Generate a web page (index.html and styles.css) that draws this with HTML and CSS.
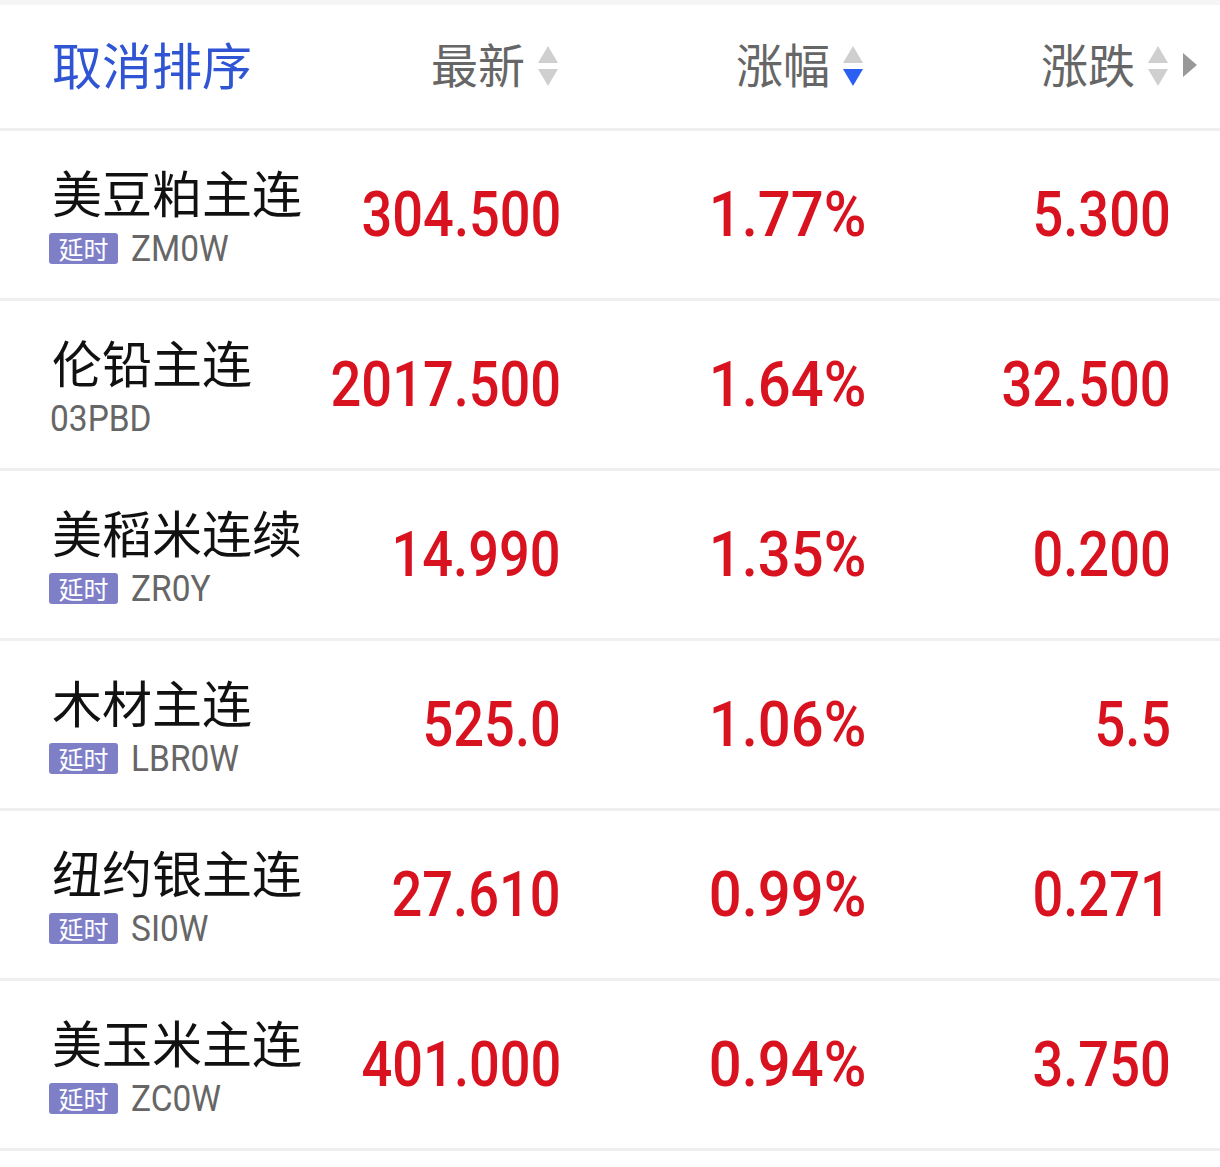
FILE: index.html
```html
<!DOCTYPE html>
<html lang="zh-CN">
<head>
<meta charset="utf-8">
<link rel="stylesheet" href="styles.css">
</head>
<body>
<div class="page">
  <div class="topstrip"></div>
  <div class="header">
    <div class="cancel">取消排序</div>
    <div class="hcell"><span>最新</span>
      <span class="sort"><i class="up"></i><i class="down"></i></span></div>
    <div class="hcell"><span>涨幅</span>
      <span class="sort"><i class="up"></i><i class="down active"></i></span></div>
    <div class="hcell"><span>涨跌</span>
      <span class="sort"><i class="up"></i><i class="down"></i></span></div>
    <div class="more"><i class="right"></i></div>
  </div>

  <div class="row">
    <div class="name"><div class="cn">美豆粕主连</div><div class="code"><span class="tag">延时</span><span class="sym">ZM0W</span></div></div>
    <div class="num"><span>304.500</span></div><div class="num pct"><span>1.77%</span></div><div class="num"><span>5.300</span></div>
  </div>
  <div class="row">
    <div class="name"><div class="cn">伦铅主连</div><div class="code nocode"><span class="sym">03PBD</span></div></div>
    <div class="num"><span>2017.500</span></div><div class="num pct"><span>1.64%</span></div><div class="num"><span>32.500</span></div>
  </div>
  <div class="row">
    <div class="name"><div class="cn">美稻米连续</div><div class="code"><span class="tag">延时</span><span class="sym">ZR0Y</span></div></div>
    <div class="num"><span>14.990</span></div><div class="num pct"><span>1.35%</span></div><div class="num"><span>0.200</span></div>
  </div>
  <div class="row">
    <div class="name"><div class="cn">木材主连</div><div class="code"><span class="tag">延时</span><span class="sym">LBR0W</span></div></div>
    <div class="num"><span>525.0</span></div><div class="num pct"><span>1.06%</span></div><div class="num"><span>5.5</span></div>
  </div>
  <div class="row">
    <div class="name"><div class="cn">纽约银主连</div><div class="code"><span class="tag">延时</span><span class="sym">SI0W</span></div></div>
    <div class="num"><span>27.610</span></div><div class="num pct"><span>0.99%</span></div><div class="num"><span>0.271</span></div>
  </div>
  <div class="row">
    <div class="name"><div class="cn">美玉米主连</div><div class="code"><span class="tag">延时</span><span class="sym">ZC0W</span></div></div>
    <div class="num"><span>401.000</span></div><div class="num pct"><span>0.94%</span></div><div class="num"><span>3.750</span></div>
  </div>
</div>
</body>
</html>
```
FILE: styles.css
```css
html, body {
  margin: 0;
  padding: 0;
  background: #ffffff;
}
.page {
  width: 1220px;
  font-family: "Noto Sans CJK SC", "Noto Sans", sans-serif;
}
.topstrip {
  height: 5px;
  background: #f5f5f5;
}
.header, .row {
  display: grid;
  grid-template-columns: 259px 250px 305px 305px 1fr;
  padding-left: 52px;
  align-items: center;
  border-bottom: 3px solid #efefef;
}
.header {
  height: 123px;
}
.row {
  height: 167px;
}
.cancel {
  color: #2f55d4;
  font-size: 50px;
  line-height: 1;
  padding-bottom: 8px;
}
.hcell {
  display: flex;
  justify-content: flex-end;
  align-items: center;
  color: #666666;
  font-size: 47px;
  line-height: 1;
  gap: 12px;
  padding-bottom: 8px;
  padding-right: 2px;
}
.hcell .sort {
  margin-top: 6px;
}
.sort {
  display: flex;
  flex-direction: column;
  gap: 6px;
  width: 22px;
  align-items: center;
}
.sort i {
  display: block;
  width: 0;
  height: 0;
  border-left: 10px solid transparent;
  border-right: 10px solid transparent;
}
.sort .up {
  border-bottom: 17px solid #cfcfcf;
}
.sort .down {
  border-top: 17px solid #cfcfcf;
}
.sort .down.active {
  border-top-color: #2b5ff2;
}
.more {
  display: flex;
  align-items: center;
  padding-left: 12px;
  padding-bottom: 4px;
}
.more .right {
  display: block;
  width: 0;
  height: 0;
  border-top: 12px solid transparent;
  border-bottom: 12px solid transparent;
  border-left: 14px solid #999999;
}
.name {
  display: flex;
  flex-direction: column;
  gap: 8px;
  padding-top: 0;
}
.cn {
  color: #111111;
  font-size: 50px;
  line-height: 60px;
  white-space: nowrap;
}
.code {
  display: flex;
  align-items: center;
  color: #666666;
  font-family: "Roboto", "Liberation Sans", sans-serif;
  font-size: 36px;
  line-height: 40px;
  height: 40px;
}
.sym {
  display: inline-block;
  transform: scaleX(0.93);
  transform-origin: left center;
  white-space: nowrap;
}
.nocode {
  margin-left: -2px;
}
.tag {
  display: inline-block;
  flex: none;
  background: #7f7fc8;
  color: #ffffff;
  font-family: "Noto Sans CJK SC", sans-serif;
  font-size: 25px;
  line-height: 31px;
  height: 31px;
  width: 69px;
  text-align: center;
  border-radius: 3px;
  margin-left: -3px;
  margin-right: 13px;
}
.num {
  display: flex;
  justify-content: flex-end;
  color: #d8121f;
  font-family: "Roboto", "Liberation Sans", sans-serif;
  font-weight: 500;
  font-size: 63px;
  line-height: 1;
  white-space: nowrap;
}
.num span {
  display: inline-block;
  flex: none;
  transform: scaleX(0.86);
  transform-origin: right center;
}
.num.pct span {
  transform: scaleX(0.92);
}
```
